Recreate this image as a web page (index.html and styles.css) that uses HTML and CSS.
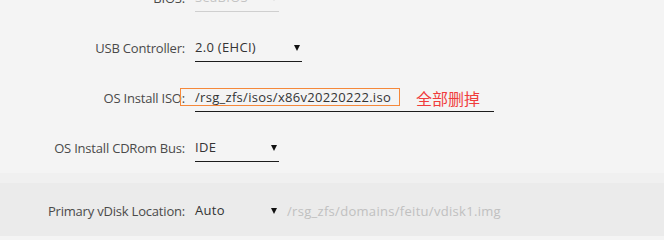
FILE: index.html
```html
<!DOCTYPE html>
<html>
<head>
<meta charset="utf-8">
<link rel="stylesheet" href="styles.css">
</head>
<body>
<div class="page">
  <section class="panel panel-top">
    <div class="row">
      <div class="label">BIOS:</div>
      <div class="field field-select w84 disabled"><span>SeaBIOS</span><span class="arrow"></span></div>
    </div>
    <div class="row">
      <div class="label">USB Controller:</div>
      <div class="field field-select w107"><span>2.0 (EHCI)</span><span class="arrow"></span></div>
    </div>
    <div class="row row-iso">
      <div class="label">OS Install ISO:</div>
      <div class="field w299"><span>/rsg_zfs/isos/x86v20220222.iso</span></div>
      <div class="mark-box"></div>
      <div class="mark-note">全部删掉</div>
    </div>
    <div class="row">
      <div class="label">OS Install CDRom Bus:</div>
      <div class="field field-select w84"><span>IDE</span><span class="arrow"></span></div>
    </div>
  </section>
  <div class="divider"></div>
  <section class="panel panel-bottom">
    <div class="row">
      <div class="label">Primary vDisk Location:</div>
      <div class="field field-select w84 plain"><span>Auto</span><span class="arrow"></span></div>
      <div class="hint">/rsg_zfs/domains/feitu/vdisk1.img</div>
    </div>
  </section>
</div>
</body>
</html>
```
FILE: styles.css
```css
html, body {
  margin: 0;
  padding: 0;
  background: #f4f4f4;
  overflow: hidden;
}
.page {
  width: 664px;
  margin-top: -27px;
  font-family: "Open Sans", "Noto Sans CJK SC", sans-serif;
  font-size: 13px;
  color: #333;
}
.panel-top {
  background: #f4f4f4;
}
.divider {
  height: 10px;
  background: #f0f0f0;
}
.panel-bottom {
  background: #ebebeb;
  padding-top: 3px;
}
.row {
  position: relative;
  display: flex;
  align-items: center;
  height: 50px;
}
.label {
  width: 185px;
  text-align: right;
  color: #4a4a4a;
  line-height: 28px;
  margin-right: 10px;
  letter-spacing: -0.2px;
  flex: none;
}
.field {
  box-sizing: border-box;
  height: 28px;
  line-height: 27px;
  border-bottom: 1px solid #1c1c1c;
  display: flex;
  align-items: center;
  justify-content: space-between;
  color: #333;
  letter-spacing: 0.3px;
  flex: none;
}
.field.plain {
  border-bottom-color: transparent;
}
.field.disabled {
  color: #c4c4c4;
  border-bottom-color: #cfcfcf;
}
.w84 { width: 84px; }
.w107 { width: 107px; }
.w299 { width: 299px; }
.arrow {
  width: 0;
  height: 0;
  border-left: 3.5px solid transparent;
  border-right: 3.5px solid transparent;
  border-top: 6px solid #111;
  margin-right: 2px;
  margin-top: 1px;
}
.field.disabled .arrow {
  border-top-color: #c4c4c4;
}
.mark-box {
  position: absolute;
  left: 180px;
  top: 15px;
  width: 220px;
  height: 18px;
  border: 1.5px solid #f5883a;
  box-sizing: border-box;
}
.mark-note {
  position: absolute;
  left: 416px;
  top: 15px;
  font-size: 16px;
  line-height: 20px;
  color: #f03c3c;
  font-family: "Noto Sans CJK SC", sans-serif;
}
.hint {
  margin-left: 8px;
  color: #c0c0c0;
  line-height: 28px;
  letter-spacing: 0.3px;
}
```
